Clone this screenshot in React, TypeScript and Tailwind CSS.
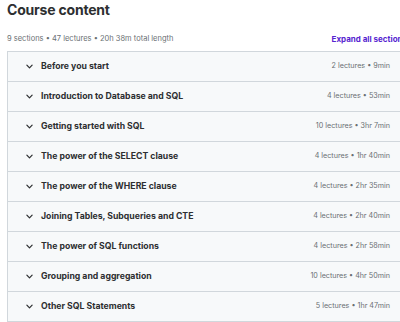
const sections = [
  { title: 'Before you start', meta: '2 lectures • 9min' },
  { title: 'Introduction to Database and SQL', meta: '4 lectures • 53min' },
  { title: 'Getting started with SQL', meta: '10 lectures • 3hr 7min' },
  { title: 'The power of the SELECT clause', meta: '4 lectures • 1hr 40min' },
  { title: 'The power of the WHERE clause', meta: '4 lectures • 2hr 35min' },
  { title: 'Joining Tables, Subqueries and CTE', meta: '4 lectures • 2hr 40min' },
  { title: 'The power of SQL functions', meta: '4 lectures • 2hr 58min' },
  { title: 'Grouping and aggregation', meta: '10 lectures • 4hr 50min' },
  { title: 'Other SQL Statements', meta: '5 lectures • 1hr 47min' },
];

function Chevron() {
  return (
    <svg className="w-[7px] h-[5px] text-[#2d2f31]" viewBox="0 0 8 5" fill="none" stroke="currentColor" strokeWidth={1.4}>
      <path d="M1 1l3 3 3-3" strokeLinecap="round" strokeLinejoin="round" />
    </svg>
  );
}

export default function App() {
  return (
    <div className="w-[400px] h-[322px] overflow-hidden bg-white font-['Inter',sans-serif]">
      <div className="w-[414px] pl-[7px]">
        <h2 className="text-[14px] leading-[20px] font-bold text-[#2d2f31] tracking-[-0.2px]">
          Course content
        </h2>
        <div className="flex items-center justify-between mt-[14px] h-[10px] pr-[7px]">
          <span className="text-[7.5px] text-[#6a6f73]">9 sections • 47 lectures • 20h 38m total length</span>
          <span className="text-[8px] font-bold text-[#5624d0] whitespace-nowrap">Expand all sections</span>
        </div>
        <div className="mt-[7px] border border-[#d1d7dc]">
          {sections.map((s, i) => (
            <div
              key={s.title}
              className={`flex items-center bg-[#f7f9fa] pl-[18px] pr-[23px] ${i > 0 ? 'h-[30px] border-t border-[#d1d7dc]' : 'h-[29px]'}`}
            >
              <Chevron />
              <span className="ml-[8px] text-[8.7px] font-bold text-[#2d2f31]">{s.title}</span>
              <span className="ml-auto text-[7.2px] text-[#6a6f73]">{s.meta}</span>
            </div>
          ))}
        </div>
      </div>
    </div>
  );
}
